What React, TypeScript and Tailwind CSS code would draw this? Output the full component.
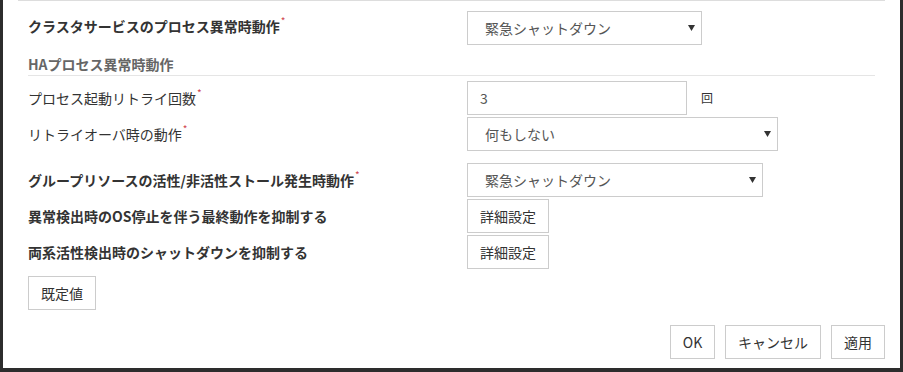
import React from "react";

const FONT = { fontFamily: '"Noto Sans CJK JP", "Noto Sans", sans-serif' };

function Req() {
  return <span className="text-[#d0454f] text-[10px] align-top font-normal leading-none ml-[1px]">*</span>;
}

function Arrow() {
  return (
    <svg width="7" height="6" viewBox="0 0 7 6" className="shrink-0">
      <polygon points="0,0 7,0 3.5,6" fill="#333" />
    </svg>
  );
}

function Select({ value, width }: { value: string; width: string }) {
  return (
    <div className={`${width} h-[34px] border border-[#ccc] bg-white flex items-center pl-[17px] pr-[6px] justify-between`}>
      <span className="text-[14px] text-[#555] leading-[20px]">{value}</span>
      <Arrow />
    </div>
  );
}

function Btn({ children, className = "" }: { children: React.ReactNode; className?: string }) {
  return (
    <div className={`h-[34px] border border-[#ccc] bg-white px-3 flex items-center justify-center text-[14px] text-[#333] leading-[20px] ${className}`}>
      {children}
    </div>
  );
}

export default function App() {
  return (
    <div className="w-[903px] h-[372px] bg-[#2d2d2d] pl-[3px] pr-[3px] pb-[4px]" style={FONT}>
      <div className="h-full bg-white px-[15px]">
        <div className="border-t border-[#ddd] h-full flex flex-col">
          <div className="px-[10px] flex flex-col">
            <div className="mt-[10px] h-[34px] flex items-center">
              <div className="w-[439px] text-[14px] font-bold text-[#333] leading-[20px] mb-[4px]">
                クラスタサービスのプロセス異常時動作<Req />
              </div>
              <Select value="緊急シャットダウン" width="w-[235px]" />
            </div>
            <div className="mt-[7px] h-[24px] flex items-center border-b border-[#e5e5e5] text-[14px] font-bold text-[#666] leading-[20px]">
              HAプロセス異常時動作
            </div>
            <div className="mt-[5px] h-[34px] flex items-center">
              <div className="w-[439px] text-[14px] text-[#333] leading-[20px]">
                プロセス起動リトライ回数<Req />
              </div>
              <div className="w-[220px] h-[34px] border border-[#ccc] flex items-center pl-[12px] text-[14px] text-[#555]">
                3
              </div>
              <span className="ml-[14px] text-[12px] text-[#333]">回</span>
            </div>
            <div className="mt-[2px] h-[34px] flex items-center">
              <div className="w-[439px] text-[14px] text-[#333] leading-[20px]">
                リトライオーバ時の動作<Req />
              </div>
              <Select value="何もしない" width="w-[311px]" />
            </div>
            <div className="mt-[12px] h-[34px] flex items-center">
              <div className="w-[439px] text-[14px] font-bold text-[#333] leading-[20px]">
                グループリソースの活性/非活性ストール発生時動作<Req />
              </div>
              <Select value="緊急シャットダウン" width="w-[296px]" />
            </div>
            <div className="mt-[2px] h-[34px] flex items-center">
              <div className="w-[439px] text-[14px] font-bold text-[#333] leading-[20px]">
                異常検出時のOS停止を伴う最終動作を抑制する
              </div>
              <Btn className="w-[82px]">詳細設定</Btn>
            </div>
            <div className="mt-[2px] h-[34px] flex items-center">
              <div className="w-[439px] text-[14px] font-bold text-[#333] leading-[20px]">
                両系活性検出時のシャットダウンを抑制する
              </div>
              <Btn className="w-[82px]">詳細設定</Btn>
            </div>
            <div className="mt-[7px] flex">
              <Btn className="w-[68px]">既定値</Btn>
            </div>
          </div>
          <div className="mt-[15px] flex justify-end gap-[10px]">
            <Btn className="w-[45px]">OK</Btn>
            <Btn className="w-[96px]">キャンセル</Btn>
            <Btn className="w-[54px]">適用</Btn>
          </div>
        </div>
      </div>
    </div>
  );
}
